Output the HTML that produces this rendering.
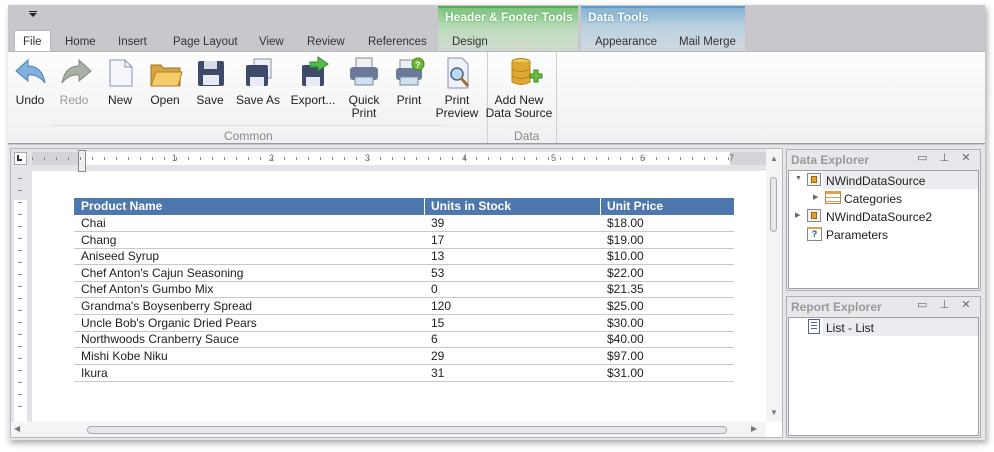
<!DOCTYPE html>
<html><head><meta charset="utf-8"><style>
*{box-sizing:border-box;margin:0;padding:0}
body{width:994px;height:452px;background:#fff;font-family:"Liberation Sans","DejaVu Sans",sans-serif;font-size:12px;color:#1e1e1e;position:relative;overflow:hidden}
.abs{position:absolute}
.win{left:8px;top:5px;width:977px;height:435px;background:#c8c8cc;box-shadow:2px 3px 6px rgba(0,0,0,.35)}
.tab{position:absolute;top:36px;font-size:11.5px;color:#333}
.lbl{position:absolute;text-align:center;font-size:12px;line-height:13px;color:#1e1e1e;width:70px}
.row{position:absolute;left:74px;width:660px;height:17px;border-bottom:1px solid #c8c8c8;font-size:12px}
.row span{position:absolute;top:1px}
.hd{background:#4e77ad;color:#fff;font-weight:bold;border:none}
</style></head><body>
<div class="abs win"></div>
<div class="abs" style="left:29px;top:13px;width:0;height:0;border-left:4px solid transparent;border-right:4px solid transparent;border-top:4px solid #222"></div>
<div class="abs" style="left:29px;top:11px;width:8px;height:1px;background:#222"></div>
<div class="abs" style="left:438px;top:6px;width:140px;height:46px;background:linear-gradient(#7fc37f,#bcdcbc 45%,#d2dad2);border-top:2px solid #4fae4f"></div>
<div class="abs" style="left:445px;top:10px;color:#fff;font-weight:bold;font-size:12px;text-shadow:0 0 2px #4a4">Header &amp; Footer Tools</div>
<div class="abs" style="left:581px;top:6px;width:164px;height:46px;background:linear-gradient(#86b3d3,#bcd2e1 45%,#d2d8dd);border-top:2px solid #5c9ccc"></div>
<div class="abs" style="left:588px;top:10px;color:#fff;font-weight:bold;font-size:12px;text-shadow:0 0 2px #48a">Data Tools</div>
<div class="abs" style="left:14px;top:30px;width:37px;height:23px;background:#fff;border:1px solid #b8b8b8;border-bottom:none"></div>
<div class="tab" style="left:23px">File</div>
<div class="tab" style="left:65px">Home</div>
<div class="tab" style="left:118px">Insert</div>
<div class="tab" style="left:173px">Page Layout</div>
<div class="tab" style="left:259px">View</div>
<div class="tab" style="left:307px">Review</div>
<div class="tab" style="left:368px">References</div>
<div class="tab" style="left:452px">Design</div>
<div class="tab" style="left:595px">Appearance</div>
<div class="tab" style="left:679px">Mail Merge</div>
<div class="abs" style="left:8px;top:51px;width:977px;height:93px;background:linear-gradient(#fdfdfd,#f0f0f2);border-top:1px solid #b8b8bc;border-bottom:1px solid #9a9aa0"></div>
<div class="abs" style="left:487px;top:52px;width:1px;height:91px;background:#d0d0d4"></div>
<div class="abs" style="left:556px;top:52px;width:1px;height:91px;background:#d0d0d4"></div>
<div class="abs" style="left:52px;top:125px;width:393px;height:1px;background:#e0e0e4"></div>
<div class="abs" style="left:224px;top:129px;color:#888">Common</div>
<div class="abs" style="left:514px;top:129px;color:#888">Data</div>
<svg class="abs" style="left:0;top:50px" width="560" height="45">
<path d="M16 21 L28 10 L28 16 Q42 16 45 33 Q38 24 28 25 L28 31 Z" fill="#7fb0e0" stroke="#4a7fb5"/>
<path d="M91 21 L79 10 L79 16 Q65 16 62 33 Q69 24 79 25 L79 31 Z" fill="#a8b0a8" stroke="#808880"/>
<path d="M110 10 H125 L132 17 V36 H110 Z" fill="#f4f6fb" stroke="#8c94b0"/><path d="M125 10 V17 H132" fill="none" stroke="#8c94b0"/>
<path d="M151 15 H161 L163 18 H180 V36 H151 Z" fill="#d8a640" stroke="#a07420"/><path d="M151 36 L156 22 H182 L178 36 Z" fill="#f4cc6a" stroke="#b08030"/>
<rect x="198" y="11" width="26" height="25" rx="2" fill="#3f4a6a"/><rect x="204" y="11" width="13" height="8" fill="#d8dce6"/><rect x="203" y="25" width="16" height="10" fill="#e6eaf2"/>
<rect x="254" y="9" width="17" height="19" fill="#eef0f6" stroke="#8890a8"/><rect x="246" y="15" width="22" height="21" rx="2" fill="#3f4a6a"/><rect x="250" y="27" width="14" height="9" fill="#e6eaf2"/>
<rect x="302" y="15" width="22" height="21" rx="2" fill="#3f4a6a"/><rect x="306" y="27" width="14" height="9" fill="#e6eaf2"/><path d="M310 12 H318 V7 L328 14 L318 21 V17 H310 Z" fill="#58b848" stroke="#2e8a2e"/>
<rect x="356" y="8" width="16" height="10" fill="#eef0f4" stroke="#888"/><rect x="350" y="17" width="28" height="13" rx="3" fill="#6a7a98"/><rect x="355" y="27" width="18" height="8" fill="#cfe0f0" stroke="#789"/>
<rect x="400" y="10" width="14" height="9" fill="#eef0f4" stroke="#888"/><rect x="396" y="18" width="26" height="12" rx="3" fill="#6a7a98"/><rect x="400" y="27" width="18" height="8" fill="#cfe0f0" stroke="#789"/><circle cx="418" cy="14" r="6" fill="#6cb830" stroke="#3a8a1a"/><text x="415" y="18" font-size="9" fill="#fff" font-weight="bold">?</text>
<path d="M448 8 H462 L468 14 V38 H448 Z" fill="#eef2fa" stroke="#8890b0"/><circle cx="457" cy="24" r="6" fill="#bcd8f4" stroke="#506080" stroke-width="1.5"/><path d="M461 28 L468 36" stroke="#a07030" stroke-width="3"/>
<ellipse cx="521" cy="12" rx="9" ry="3.5" fill="#f0c860" stroke="#b08020"/><path d="M512 12 V32 Q521 37 530 32 V12" fill="#e0a830" stroke="#b08020"/><path d="M512 19 Q521 24 530 19 M512 26 Q521 31 530 26" fill="none" stroke="#b08020"/>
<path d="M530 24 H534 V20 H538 V24 H542 V28 H538 V32 H534 V28 H530 Z" fill="#6cc040" stroke="#3a8a1a"/>
</svg>
<div class="lbl" style="left:-5px;top:94px">Undo</div>
<div class="lbl" style="left:39px;top:94px;color:#999">Redo</div>
<div class="lbl" style="left:85px;top:94px">New</div>
<div class="lbl" style="left:130px;top:94px">Open</div>
<div class="lbl" style="left:175px;top:94px">Save</div>
<div class="lbl" style="left:223px;top:94px">Save As</div>
<div class="lbl" style="left:278px;top:94px">Export...</div>
<div class="lbl" style="left:329px;top:94px">Quick<br>Print</div>
<div class="lbl" style="left:374px;top:94px">Print</div>
<div class="lbl" style="left:422px;top:94px">Print<br>Preview</div>
<div class="lbl" style="left:484px;top:94px">Add New<br>Data Source</div>
<div class="abs" style="left:8px;top:145px;width:977px;height:295px;background:#e6e6ea"></div>
<div class="abs" style="left:10px;top:148px;width:773px;height:290px;background:#fff;border:1px solid #b8b8bc"></div>
<div class="abs" style="left:11px;top:149px;width:755px;height:22px;background:#e4e4e8"></div>
<div class="abs" style="left:14px;top:152px;width:13px;height:13px;background:#fff;border:1px solid #aaa"></div>
<div class="abs" style="left:17px;top:155px;width:5px;height:6px;border-left:2px solid #333;border-bottom:2px solid #333"></div>
<div class="abs" style="left:32px;top:152px;width:704px;height:13px;background:#fff"></div>
<div class="abs" style="left:32px;top:152px;width:49px;height:13px;background:#d4d4d8"></div>
<div class="abs" style="left:730px;top:152px;width:36px;height:13px;background:#d4d4d8"></div>
<div class="abs" style="left:78px;top:150px;width:8px;height:22px;border:1px solid #888;background:#eee"></div>
<div class="abs" style="left:172px;top:153px;font-size:9px;color:#666">1</div>
<div class="abs" style="left:269px;top:153px;font-size:9px;color:#666">2</div>
<div class="abs" style="left:365px;top:153px;font-size:9px;color:#666">3</div>
<div class="abs" style="left:462px;top:153px;font-size:9px;color:#666">4</div>
<div class="abs" style="left:551px;top:153px;font-size:9px;color:#666">5</div>
<div class="abs" style="left:640px;top:153px;font-size:9px;color:#666">6</div>
<div class="abs" style="left:729px;top:153px;font-size:9px;color:#666">7</div>
<div class="abs" style="left:32px;top:157px;width:700px;height:3px;background:repeating-linear-gradient(90deg,#888 0 1px,transparent 1px 12px)"></div>
<div class="abs" style="left:11px;top:171px;width:21px;height:251px;background:#e4e4e8"></div>
<div class="abs" style="left:14px;top:200px;width:13px;height:222px;background:#fff"></div>
<div class="abs" style="left:18px;top:178px;width:4px;height:240px;background:repeating-linear-gradient(#888 0 1px,transparent 1px 12px)"></div>
<div class="abs" style="left:766px;top:149px;width:16px;height:273px;background:#f4f4f6"></div>
<div class="abs" style="left:770px;top:177px;width:7px;height:55px;border:1px solid #aaa;border-radius:4px;background:#e8e8ec"></div>
<div class="abs" style="left:770px;top:154px;font-size:8px;color:#777">▲</div>
<div class="abs" style="left:770px;top:408px;font-size:8px;color:#777">▼</div>
<div class="abs" style="left:11px;top:422px;width:755px;height:15px;background:#f4f4f6"></div>
<div class="abs" style="left:87px;top:426px;width:640px;height:8px;border:1px solid #aaa;border-radius:4px;background:#e8e8ec"></div>
<div class="abs" style="left:14px;top:424px;font-size:8px;color:#777">◀</div>
<div class="abs" style="left:751px;top:424px;font-size:8px;color:#777">▶</div>
<div class="row hd" style="top:198px"><span style="left:7px">Product Name</span><span style="left:357px">Units in Stock</span><span style="left:533px">Unit Price</span></div>
<div class="abs" style="left:424px;top:198px;width:1px;height:17px;background:#fff"></div>
<div class="abs" style="left:600px;top:198px;width:1px;height:17px;background:#fff"></div>
<div class="row" style="top:215px"><span style="left:7px">Chai</span><span style="left:357px">39</span><span style="left:533px">$18.00</span></div>
<div class="row" style="top:232px"><span style="left:7px">Chang</span><span style="left:357px">17</span><span style="left:533px">$19.00</span></div>
<div class="row" style="top:248px"><span style="left:7px">Aniseed Syrup</span><span style="left:357px">13</span><span style="left:533px">$10.00</span></div>
<div class="row" style="top:265px"><span style="left:7px">Chef Anton's Cajun Seasoning</span><span style="left:357px">53</span><span style="left:533px">$22.00</span></div>
<div class="row" style="top:281px"><span style="left:7px">Chef Anton's Gumbo Mix</span><span style="left:357px">0</span><span style="left:533px">$21.35</span></div>
<div class="row" style="top:298px"><span style="left:7px">Grandma's Boysenberry Spread</span><span style="left:357px">120</span><span style="left:533px">$25.00</span></div>
<div class="row" style="top:315px"><span style="left:7px">Uncle Bob's Organic Dried Pears</span><span style="left:357px">15</span><span style="left:533px">$30.00</span></div>
<div class="row" style="top:331px"><span style="left:7px">Northwoods Cranberry Sauce</span><span style="left:357px">6</span><span style="left:533px">$40.00</span></div>
<div class="row" style="top:348px"><span style="left:7px">Mishi Kobe Niku</span><span style="left:357px">29</span><span style="left:533px">$97.00</span></div>
<div class="row" style="top:365px"><span style="left:7px">Ikura</span><span style="left:357px">31</span><span style="left:533px">$31.00</span></div>
<div class="abs" style="left:786px;top:149px;width:195px;height:142px;background:#e8e8ec;border:1px solid #b0b0b4"></div>
<div class="abs" style="left:791px;top:153px;font-weight:bold;color:#999">Data Explorer</div>
<div class="abs" style="left:917px;top:151px;color:#666;font-size:11px">▭&nbsp;&nbsp;&nbsp;&nbsp;⊥&nbsp;&nbsp;&nbsp;&nbsp;✕</div>
<div class="abs" style="left:788px;top:170px;width:191px;height:119px;background:#fff;border:1px solid #a0a0a4"></div>
<div class="abs" style="left:823px;top:171px;width:155px;height:18px;background:#ebebf0"></div>
<div class="abs" style="left:795px;top:175px;font-size:7px;color:#666">▼</div>
<div class="abs" style="left:807px;top:173px;width:14px;height:13px;border:1px solid #888;background:#f4f4f4"><div style="margin:2px 3px;width:6px;height:7px;background:#e8a020;border:1px solid #a06010"></div></div>
<div class="abs" style="left:826px;top:174px">NWindDataSource</div>
<div class="abs" style="left:813px;top:193px;font-size:7px;color:#666">▶</div>
<div class="abs" style="left:825px;top:191px;width:16px;height:13px;border:1px solid #c08040;background:repeating-linear-gradient(#fff 0 3px,#c8a070 3px 4px);border-top:3px solid #e0a050"></div>
<div class="abs" style="left:844px;top:192px">Categories</div>
<div class="abs" style="left:795px;top:211px;font-size:7px;color:#666">▶</div>
<div class="abs" style="left:807px;top:209px;width:14px;height:13px;border:1px solid #888;background:#f4f4f4"><div style="margin:2px 3px;width:6px;height:7px;background:#e8a020;border:1px solid #a06010"></div></div>
<div class="abs" style="left:826px;top:210px">NWindDataSource2</div>
<div class="abs" style="left:807px;top:227px;width:15px;height:14px;border:1px solid #888;border-top:2px solid #e0a050;background:#fff;font-size:9px;color:#2050a0;text-align:center;font-weight:bold">?</div>
<div class="abs" style="left:826px;top:228px">Parameters</div>
<div class="abs" style="left:786px;top:296px;width:195px;height:142px;background:#e8e8ec;border:1px solid #b0b0b4"></div>
<div class="abs" style="left:791px;top:300px;font-weight:bold;color:#999">Report Explorer</div>
<div class="abs" style="left:917px;top:298px;color:#666;font-size:11px">▭&nbsp;&nbsp;&nbsp;&nbsp;⊥&nbsp;&nbsp;&nbsp;&nbsp;✕</div>
<div class="abs" style="left:788px;top:317px;width:191px;height:119px;background:#fff;border:1px solid #a0a0a4"></div>
<div class="abs" style="left:823px;top:318px;width:155px;height:18px;background:#ebebf0"></div>
<div class="abs" style="left:808px;top:319px;width:12px;height:15px;border:1px solid #5060a0;background:repeating-linear-gradient(#fff 0 2px,#5060a0 2px 3px);background-clip:content-box;padding:2px"></div>
<div class="abs" style="left:826px;top:321px">List - List</div>
</body></html>
